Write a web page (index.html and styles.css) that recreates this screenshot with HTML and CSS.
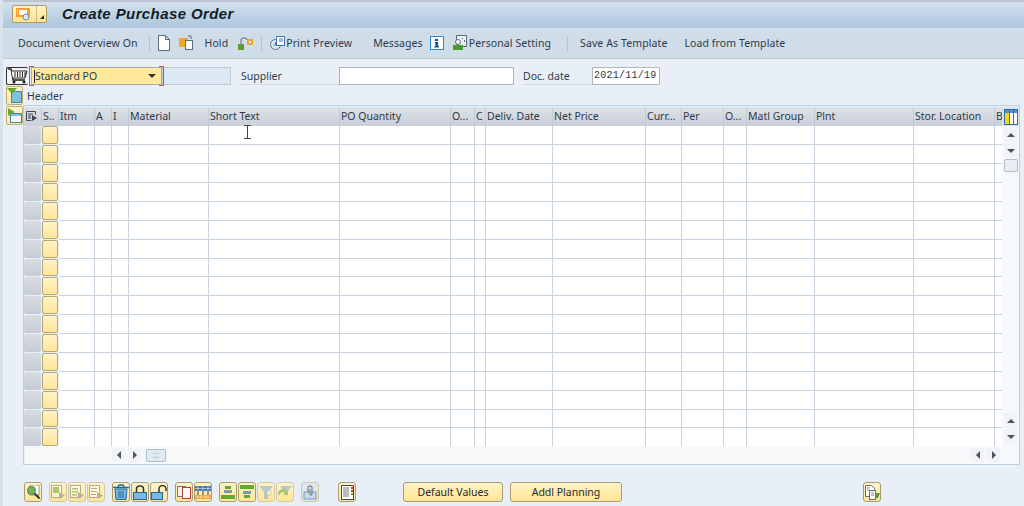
FILE: index.html
```html
<!DOCTYPE html>
<html lang="en">

<head>
    <meta charset="UTF-8">
    <title>Create Purchase Order</title>
    <link rel="stylesheet" href="styles.css">
</head>

<body>
    <div class="title-bar">
        <div class="menu-btn">
            <span class="menu-btn-main">
                <svg width="20" height="16" viewBox="0 0 20 16">
                    <rect x="1" y="2" width="14" height="9" fill="#f3a030" />
                    <rect x="4" y="4" width="8" height="5" fill="#fff" />
                    <circle cx="11" cy="11" r="3" fill="#d8e4f0" stroke="#6a8cb0" />
                    <path d="M2 4h1M2 6h1M2 8h1" stroke="#fff" />
                </svg>
            </span>
            <span class="menu-btn-arrow"></span>
        </div>
        <h1>Create Purchase Order</h1>
    </div>

    <div class="toolbar">
        <span class="tb-text first">Document Overview On</span>
        <span class="tb-sep sep-a"></span>
        <svg class="tb-icon icon-doc" width="12" height="16" viewBox="0 0 12 16">
            <path d="M.5.5h7l4 4v11H.5z M7.5.5v4h4" fill="#fff" stroke="#5f6b78" />
        </svg>
        <svg class="tb-icon icon-tpl" width="15" height="16" viewBox="0 0 15 16">
            <rect x="0" y="3" width="9" height="9" fill="#f3a428" />
            <rect x="6.500" y="5.500" width="7" height="9" fill="#fff" stroke="#5f6b78" />
            <path d="M9 1h3v3" fill="none" stroke="#5f6b78" />
        </svg>
        <span class="tb-text hold">Hold</span>
        <svg class="tb-icon icon-hold" width="15" height="14" viewBox="0 0 15 14">
            <rect x="0" y="8" width="6" height="6" fill="#5c9e2e" />
            <rect x="9" y="3" width="6" height="6" fill="#f3a428" />
            <rect x="11" y="5" width="2" height="2" fill="#fff" />
            <path d="M3 8V4a2 2 0 0 1 2-2h2a2 2 0 0 1 2 2" fill="none" stroke="#5f6b78" />
        </svg>
        <span class="tb-sep sep-b"></span>
        <svg class="tb-icon icon-print" width="16" height="16" viewBox="0 0 16 16">
            <circle cx="5.500" cy="9.500" r="5" fill="#dfe8f0" stroke="#56708c" />
            <rect x="6.500" y="1.500" width="8" height="9" fill="#fff" stroke="#3f78b5" />
            <path d="M5.500 7v3h-2M9 4h4M9 6h4" stroke="#3f78b5" fill="none" />
        </svg>
        <span class="tb-text">Print Preview</span>
        <span class="tb-text messages">Messages</span>
        <svg class="tb-icon icon-info" width="14" height="14" viewBox="0 0 14 14">
            <rect x=".5" y=".5" width="13" height="13" fill="#fff" stroke="#2e8ad0" />
            <path d="M5 3h3v2H5zM5 6h3v4h1v1.500H4.500V10H5.500V7.500H5z" fill="#14508c" />
        </svg>
        <svg class="tb-icon icon-user" width="14" height="16" viewBox="0 0 14 16">
            <rect x="3.500" y=".5" width="10" height="11" fill="#eef2f5" stroke="#5f6b78" />
            <circle cx="5" cy="7" r="2.500" fill="#fff" stroke="#5f6b78" />
            <rect x="0" y="10" width="10" height="5" fill="#4f9a2e" />
            <path d="M9 3h1v1H9zM11 5h1v2h-1z" fill="#5f6b78" />
        </svg>
        <span class="tb-text personal">Personal Setting</span>
        <span class="tb-sep sep-c"></span>
        <span class="tb-text save">Save As Template</span>
        <span class="tb-text load">Load from Template</span>
    </div>

    <main class="content">
        <div class="filter-row">
            <button class="cart-btn">
                <svg width="20" height="16" viewBox="0 0 20 16">
                    <path d="M0 1h3l2 11h12" fill="none" stroke="#222" stroke-width="1.300" />
                    <path d="M3.500 3H19l-2 7H5" fill="#fff" stroke="#222" />
                    <path d="M7 4v5M9.500 4v5M12 4v5M14.500 4v5M17 4v5" stroke="#222" />
                    <circle cx="6" cy="14" r="1.500" fill="#222" />
                    <circle cx="16" cy="14" r="1.500" fill="#222" />
                </svg>
            </button>
            <div class="po-type">
                <span class="caret"></span>
                <span class="po-type-text">Standard PO</span>
                <span class="arrow-down"></span>
            </div>
            <div class="po-number"></div>
            <span class="field-label supplier-label">Supplier</span>
            <div class="field supplier-field"></div>
            <span class="field-label date-label">Doc. date</span>
            <div class="field date-field">2021/11/19</div>
        </div>

        <div class="header-row">
            <button class="side-btn">
                <svg width="15" height="15" viewBox="0 0 15 15">
                    <rect x="4.500" y="3.500" width="10" height="11" fill="#7cc0e2" stroke="#4a7f9f" />
                    <path d="M0 0h10L5 6z" fill="#63a831" />
                </svg>
            </button>
            <span class="header-label">Header</span>
        </div>

        <div class="items-row">
            <button class="side-btn">
                <svg width="15" height="15" viewBox="0 0 15 15">
                    <rect x="3.500" y="5.500" width="11" height="9" fill="#f2f8fc" stroke="#4a7f9f" />
                    <rect x="4" y="6" width="10" height="2" fill="#7cc0e2" />
                    <path d="M1 0l7 4-7 4z" fill="#63a831" />
                </svg>
            </button>

            <div class="grid">
                <div class="grid-main">
                    <div class="table-wrap">
                        <table class="items">
                            <colgroup>
                                <col class="c18"><col class="c17"><col class="c36"><col class="c17"><col class="c17">
                                <col class="c80"><col class="c131"><col class="c111"><col class="c24"><col class="c11">
                                <col class="c67"><col class="c93"><col class="c36"><col class="c42"><col class="c23">
                                <col class="c68"><col class="c99"><col class="c81"><col class="c7">
                            </colgroup>
                            <thead>
                                <tr>
                                    <th class="th-icon">
                                        <svg width="12" height="12" viewBox="0 0 12 12">
                                            <path d="M.5 1.500h9v3M.5 1.500v9h5M2 4h5M2 6h3M2 8h3" fill="none" stroke="#3c4855" />
                                            <path d="M6 5l5 3-5 3z" fill="#3c4855" />
                                        </svg>
                                    </th>
                                    <th>S..</th><th>Itm</th><th>A</th><th>I</th><th>Material</th><th>Short Text</th>
                                    <th>PO Quantity</th><th>O...</th><th>C</th><th>Deliv. Date</th><th>Net Price</th>
                                    <th>Curr...</th><th>Per</th><th>O...</th><th>Matl Group</th><th>Plnt</th>
                                    <th>Stor. Location</th><th>B</th>
                                </tr>
                            </thead>
                            <tbody>
                                <tr><td class="sel"><i></i></td><td class="stat"><i></i></td><td></td><td></td><td></td><td></td><td></td><td></td><td></td><td></td><td></td><td></td><td></td><td></td><td></td><td></td><td></td><td></td><td></td></tr>
                                <tr><td class="sel"><i></i></td><td class="stat"><i></i></td><td></td><td></td><td></td><td></td><td></td><td></td><td></td><td></td><td></td><td></td><td></td><td></td><td></td><td></td><td></td><td></td><td></td></tr>
                                <tr><td class="sel"><i></i></td><td class="stat"><i></i></td><td></td><td></td><td></td><td></td><td></td><td></td><td></td><td></td><td></td><td></td><td></td><td></td><td></td><td></td><td></td><td></td><td></td></tr>
                                <tr><td class="sel"><i></i></td><td class="stat"><i></i></td><td></td><td></td><td></td><td></td><td></td><td></td><td></td><td></td><td></td><td></td><td></td><td></td><td></td><td></td><td></td><td></td><td></td></tr>
                                <tr><td class="sel"><i></i></td><td class="stat"><i></i></td><td></td><td></td><td></td><td></td><td></td><td></td><td></td><td></td><td></td><td></td><td></td><td></td><td></td><td></td><td></td><td></td><td></td></tr>
                                <tr><td class="sel"><i></i></td><td class="stat"><i></i></td><td></td><td></td><td></td><td></td><td></td><td></td><td></td><td></td><td></td><td></td><td></td><td></td><td></td><td></td><td></td><td></td><td></td></tr>
                                <tr><td class="sel"><i></i></td><td class="stat"><i></i></td><td></td><td></td><td></td><td></td><td></td><td></td><td></td><td></td><td></td><td></td><td></td><td></td><td></td><td></td><td></td><td></td><td></td></tr>
                                <tr><td class="sel"><i></i></td><td class="stat"><i></i></td><td></td><td></td><td></td><td></td><td></td><td></td><td></td><td></td><td></td><td></td><td></td><td></td><td></td><td></td><td></td><td></td><td></td></tr>
                                <tr><td class="sel"><i></i></td><td class="stat"><i></i></td><td></td><td></td><td></td><td></td><td></td><td></td><td></td><td></td><td></td><td></td><td></td><td></td><td></td><td></td><td></td><td></td><td></td></tr>
                                <tr><td class="sel"><i></i></td><td class="stat"><i></i></td><td></td><td></td><td></td><td></td><td></td><td></td><td></td><td></td><td></td><td></td><td></td><td></td><td></td><td></td><td></td><td></td><td></td></tr>
                                <tr><td class="sel"><i></i></td><td class="stat"><i></i></td><td></td><td></td><td></td><td></td><td></td><td></td><td></td><td></td><td></td><td></td><td></td><td></td><td></td><td></td><td></td><td></td><td></td></tr>
                                <tr><td class="sel"><i></i></td><td class="stat"><i></i></td><td></td><td></td><td></td><td></td><td></td><td></td><td></td><td></td><td></td><td></td><td></td><td></td><td></td><td></td><td></td><td></td><td></td></tr>
                                <tr><td class="sel"><i></i></td><td class="stat"><i></i></td><td></td><td></td><td></td><td></td><td></td><td></td><td></td><td></td><td></td><td></td><td></td><td></td><td></td><td></td><td></td><td></td><td></td></tr>
                                <tr><td class="sel"><i></i></td><td class="stat"><i></i></td><td></td><td></td><td></td><td></td><td></td><td></td><td></td><td></td><td></td><td></td><td></td><td></td><td></td><td></td><td></td><td></td><td></td></tr>
                                <tr><td class="sel"><i></i></td><td class="stat"><i></i></td><td></td><td></td><td></td><td></td><td></td><td></td><td></td><td></td><td></td><td></td><td></td><td></td><td></td><td></td><td></td><td></td><td></td></tr>
                                <tr><td class="sel"><i></i></td><td class="stat"><i></i></td><td></td><td></td><td></td><td></td><td></td><td></td><td></td><td></td><td></td><td></td><td></td><td></td><td></td><td></td><td></td><td></td><td></td></tr>
                                <tr><td class="sel"><i></i></td><td class="stat"><i></i></td><td></td><td></td><td></td><td></td><td></td><td></td><td></td><td></td><td></td><td></td><td></td><td></td><td></td><td></td><td></td><td></td><td></td></tr>
                            </tbody>
                        </table>
                    </div>

                    <div class="vscroll">
                        <div class="config-btn">
                            <svg width="14" height="16" viewBox="0 0 14 16">
                                <rect x=".5" y=".5" width="13" height="15" fill="#fff" stroke="#2e6ea8" />
                                <rect x="1" y="1" width="12" height="3" fill="#4b94d2" />
                                <rect x="1" y="4" width="4" height="11" fill="#f6d800" />
                                <path d="M5.500 1v14M9.500 1v14" stroke="#2e6ea8" />
                            </svg>
                        </div>
                        <span class="sb-btn"><span class="arrow-up"></span></span>
                        <span class="sb-btn"><span class="arrow-dn"></span></span>
                        <span class="v-thumb"></span>
                        <span class="v-space"></span>
                        <span class="sb-btn"><span class="arrow-up"></span></span>
                        <span class="sb-btn"><span class="arrow-dn"></span></span>
                    </div>
                </div>

                <div class="hscroll">
                    <span class="sb-btn h"><span class="arrow-l"></span></span>
                    <span class="sb-btn h"><span class="arrow-r"></span></span>
                    <span class="h-thumb">:::</span>
                    <span class="h-space"></span>
                    <span class="sb-btn h"><span class="arrow-l"></span></span>
                    <span class="sb-btn h"><span class="arrow-r"></span></span>
                </div>

                <svg class="ibeam" width="7" height="14" viewBox="0 0 7 14">
                    <path d="M0 .5h7M0 13.500h7M3.500 .5v13" stroke="#444" fill="none" />
                </svg>
            </div>
        </div>

        <div class="bottom-bar">
            <div class="btn-group">
                <button class="icon-btn">
                    <svg width="14" height="14" viewBox="0 0 14 14">
                        <rect x="4" y="0" width="9" height="10" fill="#fff" stroke="#7aa36a" />
                        <circle cx="5.500" cy="5.500" r="4" fill="#74b84a" stroke="#5f6b78" />
                        <path d="M8.500 8.500l5 5" stroke="#333" stroke-width="2" />
                    </svg>
                </button>
            </div>
            <div class="btn-group off">
                <button class="icon-btn">
                    <svg width="14" height="14" viewBox="0 0 14 14">
                        <rect x=".5" y=".5" width="10" height="12" fill="#fff" stroke="#5f6b78" />
                        <rect x="2" y="2" width="6" height="6" fill="#5c9e2e" />
                        <path d="M8 7l6 3.500L8 14z" fill="#5f7f95" />
                    </svg>
                </button>
                <button class="icon-btn">
                    <svg width="14" height="14" viewBox="0 0 14 14">
                        <rect x=".5" y=".5" width="10" height="12" fill="#fff" stroke="#5f6b78" />
                        <path d="M2 3h6v1.500H2zM2 6h6v1.500H2zM2 9h5v1.500H2z" fill="#5c9e2e" />
                        <path d="M8 7l6 3.500L8 14z" fill="#5f7f95" />
                    </svg>
                </button>
                <button class="icon-btn">
                    <svg width="14" height="14" viewBox="0 0 14 14">
                        <rect x=".5" y=".5" width="10" height="12" fill="#fff" stroke="#5f6b78" />
                        <path d="M2 3h6v1H2zM2 6h6v1H2zM2 9h5v1H2z" fill="#5f6b78" />
                        <path d="M8 7l6 3.500L8 14z" fill="#5f7f95" />
                    </svg>
                </button>
            </div>
            <div class="btn-group">
                <button class="icon-btn">
                    <svg width="16" height="16" viewBox="0 0 16 16">
                        <path d="M0 3.500h16M5 3l1-2h4l1 2" fill="none" stroke="#1e6a9e" stroke-width="1.500" />
                        <path d="M2 5h12l-1 10.500H3z" fill="#7cb8de" stroke="#1e6a9e" />
                        <path d="M6 7v7M8 7v7M10 7v7" stroke="#1e6a9e" />
                    </svg>
                </button>
                <button class="icon-btn">
                    <svg width="14" height="15" viewBox="0 0 14 15">
                        <path d="M3.500 8V4a3.500 3 0 0 1 7 0V8" fill="none" stroke="#333" stroke-width="1.500" />
                        <rect x=".5" y="7.500" width="13" height="7" fill="#7cb8de" stroke="#1e6a9e" />
                    </svg>
                </button>
                <button class="icon-btn">
                    <svg width="16" height="15" viewBox="0 0 16 15">
                        <path d="M8 8V4a3 3 0 0 1 7 0V6" fill="none" stroke="#333" stroke-width="1.500" />
                        <rect x=".5" y="7.500" width="11" height="7" fill="#7cb8de" stroke="#1e6a9e" />
                    </svg>
                </button>
            </div>
            <div class="btn-group">
                <button class="icon-btn">
                    <svg width="14" height="14" viewBox="0 0 14 14">
                        <rect x=".5" y="1.500" width="8" height="10" fill="#eee" stroke="#7d7d7d" />
                        <rect x="5.500" y="2.500" width="8" height="11" fill="#fff" stroke="#c0392b" />
                    </svg>
                </button>
                <button class="icon-btn">
                    <svg width="16" height="15" viewBox="0 0 16 15">
                        <rect x="0" y="1" width="16" height="5" fill="#3f78b5" />
                        <rect x="0" y="10" width="16" height="4" fill="#f39a28" />
                        <path d="M3 6v4M8 6v4M13 6v4" stroke="#333" />
                        <path d="M0 12h16M3 10v4M6 10v4M10 10v4M13 10v4M0 3.500h16M3 1v5M8 1v5M13 1v5" stroke="#fff" stroke-width=".5" />
                    </svg>
                </button>
            </div>
            <div class="btn-group">
                <button class="icon-btn">
                    <svg width="14" height="14" viewBox="0 0 14 14">
                        <rect x="4" y="1" width="6" height="3" fill="#63a831" />
                        <rect x="3" y="5" width="8" height="3" fill="#7d97ad" />
                        <rect x="0" y="10" width="14" height="4" fill="#63a831" />
                    </svg>
                </button>
                <button class="icon-btn">
                    <svg width="14" height="14" viewBox="0 0 14 14">
                        <rect x="0" y="0" width="14" height="4" fill="#63a831" />
                        <rect x="3" y="6" width="8" height="3" fill="#7d97ad" />
                        <rect x="4" y="10" width="6" height="3" fill="#63a831" />
                    </svg>
                </button>
                <button class="icon-btn dim">
                    <svg width="14" height="14" viewBox="0 0 14 14">
                        <path d="M0 1h14L9 7v7H5V7z" fill="#6aa8d4" />
                        <rect x="8" y="6" width="4" height="4" fill="#fff" stroke="#5f6b78" stroke-width=".5" />
                    </svg>
                </button>
                <button class="icon-btn dim">
                    <svg width="14" height="14" viewBox="0 0 14 14">
                        <path d="M2 1h12L10 6v3H6V6z" fill="#6aa8d4" />
                        <path d="M0 9a5 5 0 0 1 9-3l1-1v5H5l2-2a3 3 0 0 0-5 3z" fill="#5c9e2e" />
                    </svg>
                </button>
            </div>
            <div class="btn-group">
                <button class="icon-btn blue">
                    <svg width="14" height="15" viewBox="0 0 14 15">
                        <path d="M1 7h12v7H1z" fill="#c3dbec" stroke="#7d97ad" />
                        <path d="M5 8V3a2 2 0 0 1 4 0v6a1 1 0 0 1-2 0V4" fill="none" stroke="#7d8b98" stroke-width="1.300" />
                    </svg>
                </button>
            </div>
            <div class="btn-group wide">
                <button class="icon-btn">
                    <svg width="13" height="15" viewBox="0 0 13 15">
                        <rect x=".5" y=".5" width="12" height="14" fill="#fff" stroke="#444" />
                        <path d="M2 3h6M2 5h6M2 7h6M2 9h6M2 11h6" stroke="#777" />
                        <path d="M10 3h2M10 6h2" stroke="#c0392b" stroke-width="2" />
                        <path d="M10 9h2" stroke="#5c9e2e" stroke-width="2" />
                    </svg>
                </button>
            </div>
            <button class="text-btn default-btn">Default Values</button>
            <button class="text-btn planning-btn">Addl Planning</button>
            <button class="icon-btn last-btn">
                <svg width="15" height="15" viewBox="0 0 15 15">
                    <path d="M.5.5h6l3 3v8H.5z" fill="#fff" stroke="#6b6b6b" />
                    <rect x="4.500" y="5.500" width="6" height="9" fill="#fff" stroke="#6b6b6b" />
                    <path d="M2 3h3M2 5h2M6 8h3M6 10h3" stroke="#888" />
                    <path d="M10 8h5l-2 5h-3z" fill="#5c9e2e" />
                </svg>
            </button>
        </div>
    </main>
</body>

</html>
```

FILE: styles.css
```css
* {
    box-sizing: border-box;
}

html,
body {
    height: 100%;
}

body {
    margin: 0;
    height: 506px;
    overflow: hidden;
    font-family: 'Noto Sans', 'Liberation Sans', sans-serif;
    font-size: 10.5px;
    color: #2e3a48;
    background-color: #e8eff7;
    border-left: 3px solid #d8e2ec;
}

button {
    padding: 0;
    font-family: inherit;
}

/* title bar */
.title-bar {
    display: flex;
    align-items: center;
    height: 29px;
    padding: 0 0 3px 9px;
    border-top: 2px solid #bcc4d2;
    border-bottom: 1px solid #d9e4ee;
    background: linear-gradient(#d3e1ed, #abc6dd);
}

.title-bar h1 {
    margin: 0 0 0 15px;
    font-family: 'Liberation Sans', sans-serif;
    font-size: 15px;
    font-style: italic;
    font-weight: bold;
    letter-spacing: 0.4px;
    color: #141c26;
}

.menu-btn {
    display: flex;
    width: 35px;
    height: 18px;
    border: 1px solid #a89c70;
    border-radius: 2px;
    background: linear-gradient(#fff3c4, #ffe38f);
}

.menu-btn-main {
    display: flex;
    align-items: center;
    justify-content: center;
    width: 24px;
    border-right: 1px solid #c9bb88;
}

.menu-btn-arrow {
    flex: 1;
    position: relative;
}

.menu-btn-arrow::after {
    content: "";
    position: absolute;
    right: 2px;
    bottom: 3px;
    border-left: 4px solid transparent;
    border-bottom: 4px solid #222;
}

/* toolbar */
.toolbar {
    display: flex;
    align-items: center;
    height: 30px;
    padding: 0 0 1px 15px;
    background-color: #cfdde8;
    border-bottom: 1px solid #c0ccd8;
    font-size: 10.5px;
    letter-spacing: 0.1px;
}

.tb-text {
    white-space: nowrap;
}

.tb-sep {
    width: 1px;
    height: 15px;
    background-color: #b4c6d6;
}

.tb-icon {
    flex: none;
}

.sep-a { margin-left: 11px; }
.icon-doc { margin-left: 8px; }
.icon-tpl { margin-left: 9px; }
.hold { margin-left: 11px; }
.icon-hold { margin-left: 10px; }
.sep-b { margin-left: 8px; }
.icon-print { margin-left: 8px; }
.messages { margin-left: 21px; }
.icon-info { margin-left: 7px; }
.icon-user { margin-left: 9px; }
.personal { margin-left: 2px; }
.sep-c { margin-left: 16px; }
.save { margin-left: 12px; }
.load { margin-left: 17px; }

/* content */
.content {
    display: flex;
    flex-direction: column;
    padding: 8px 0 0 3px;
}

.filter-row {
    display: flex;
    align-items: center;
    height: 18px;
}

.cart-btn {
    display: flex;
    align-items: center;
    justify-content: center;
    width: 22px;
    height: 18px;
    border: 1px solid #333;
    border-width: 1px 0 1px 1px;
    border-radius: 2px;
    background-color: #f4f4f0;
}

.po-type {
    position: relative;
    display: flex;
    align-items: center;
    width: 131px;
    height: 18px;
    margin-left: 3px;
    padding-left: 2px;
    border: 1px solid #aaa;
    background-color: #ffea9c;
    font-size: 10.5px;
}

.po-type::before,
.po-type::after {
    content: "";
    position: absolute;
    top: -2px;
    bottom: -2px;
    width: 4px;
    border: 1px solid #d05050;
}

.po-type::before {
    left: -3px;
    border-right: none;
}

.po-type::after {
    right: -3px;
    border-left: none;
}

.caret {
    width: 1px;
    height: 13px;
    background-color: #223;
}

.po-type-text {
    flex: 1;
}

.arrow-down {
    margin-right: 5px;
    border-left: 4px solid transparent;
    border-right: 4px solid transparent;
    border-top: 4px solid #333;
}

.po-number {
    width: 69px;
    height: 18px;
    border: 1px solid #c0cad4;
    background-color: #dce8f3;
}

.field-label {
    height: 18px;
    line-height: 18px;
    border-bottom: 1px solid #d3dce6;
    white-space: nowrap;
}

.supplier-label {
    width: 100px;
    margin-left: 8px;
    padding-left: 2px;
}

.field {
    height: 18px;
    border: 1px solid #b4b4b4;
    background-color: #fff;
}

.supplier-field {
    width: 175px;
}

.date-label {
    width: 69px;
    margin-left: 9px;
}

.date-field {
    width: 68px;
    padding-left: 1px;
    font-family: 'Liberation Mono', monospace;
    font-size: 10px;
    line-height: 16px;
    letter-spacing: 0.25px;
}

.header-row {
    display: flex;
    align-items: center;
    height: 19px;
    margin-top: 1px;
}

.header-label {
    margin-left: 4px;
}

.side-btn {
    display: flex;
    flex: none;
    align-items: center;
    justify-content: center;
    width: 17px;
    height: 19px;
    border: 1px solid #bfae6e;
    border-radius: 2px;
    background: linear-gradient(#fff5cf, #ffe9a6);
}

.items-row {
    display: flex;
    align-items: flex-start;
}

.items-row .side-btn {
    margin-top: 1px;
}

/* grid */
.grid {
    position: relative;
    width: 997px;
    height: 360px;
    border: 1px solid #b8cfe4;
    background-color: #e8eff7;
    overflow: hidden;
}

.grid-main {
    display: flex;
    height: 340px;
    padding-top: 1px;
}

.table-wrap {
    width: 978px;
    height: 339px;
    overflow: hidden;
}

.items {
    width: 978px;
    border-collapse: separate;
    border-spacing: 0;
    table-layout: fixed;
    background-color: #fff;
}

.c7 { width: 7px; }
.c11 { width: 11px; }
.c17 { width: 17px; }
.c18 { width: 18px; }
.c23 { width: 23px; }
.c24 { width: 24px; }
.c36 { width: 36px; }
.c42 { width: 42px; }
.c67 { width: 67px; }
.c68 { width: 68px; }
.c80 { width: 80px; }
.c81 { width: 81px; }
.c93 { width: 93px; }
.c99 { width: 99px; }
.c111 { width: 111px; }
.c131 { width: 131px; }

.items th {
    height: 19px;
    padding: 0 0 1px 1px;
    overflow: hidden;
    border-right: 1px solid #bfcbd8;
    background: linear-gradient(#dde2e7, #c9d0d8);
    font-size: 10.5px;
    font-weight: normal;
    text-align: left;
    white-space: nowrap;
}

.items th:last-child {
    border-right: none;
}

.items th.th-icon {
    padding-left: 2px;
    line-height: 0;
}

.items td {
    height: 19px;
    padding: 0;
    border-right: 1px solid #c8d3df;
    border-bottom: 1px solid #c8d3df;
}

.items td:last-child {
    border-right: none;
}

/* the reference is scaled, every eighth row comes out a pixel shorter */
.items tbody tr:nth-child(8n) td {
    height: 18px;
}

.items td.sel,
.items td.stat {
    padding: 0 1px 1px 0;
    border: none;
    background-color: #e8eff7;
}

.items td i {
    display: block;
    height: 18px;
    border-radius: 2px;
}

.items tbody tr:nth-child(8n) td i {
    height: 17px;
}

.sel i {
    background: linear-gradient(#d8dce2, #c6ccd4);
}

.stat i {
    border: 1px solid #b3a77f;
    background: linear-gradient(#fff3c8, #ffe596);
}

.vscroll {
    display: flex;
    flex-direction: column;
    align-items: center;
    width: 17px;
    height: 339px;
    padding-bottom: 2px;
    background-color: #f7f8fa;
}

.config-btn {
    display: flex;
    flex: none;
    align-items: center;
    justify-content: center;
    width: 17px;
    height: 19px;
    background-color: #dde2e7;
}

.sb-btn {
    display: flex;
    flex: none;
    align-items: center;
    justify-content: center;
    width: 14px;
    height: 15px;
    margin-top: 1px;
    background-color: #f1f3f6;
}

.sb-btn.h {
    width: 13px;
    height: 14px;
    margin: 0 3px 0 0;
}

.arrow-up,
.arrow-dn,
.arrow-l,
.arrow-r {
    width: 0;
    height: 0;
}

.arrow-up {
    border-left: 4px solid transparent;
    border-right: 4px solid transparent;
    border-bottom: 4px solid #4a5664;
}

.arrow-dn {
    border-left: 4px solid transparent;
    border-right: 4px solid transparent;
    border-top: 4px solid #4a5664;
}

.arrow-l {
    border-top: 4px solid transparent;
    border-bottom: 4px solid transparent;
    border-right: 4px solid #4a5664;
}

.arrow-r {
    border-top: 4px solid transparent;
    border-bottom: 4px solid transparent;
    border-left: 4px solid #4a5664;
}

.v-thumb {
    flex: none;
    width: 14px;
    height: 13px;
    margin-top: 1px;
    border: 1px solid #aebccb;
    border-radius: 2px;
    background-color: #e6edf4;
}

.v-space {
    flex: 1;
}

.hscroll {
    display: flex;
    align-items: center;
    height: 18px;
    margin-left: 1px;
    padding: 0 16px 0 87px;
    background-color: #f7f8fa;
}

.h-thumb {
    width: 20px;
    height: 13px;
    margin-left: 2px;
    border: 1px solid #aebccb;
    border-radius: 2px;
    background-color: #e2e8ef;
    font-size: 8px;
    line-height: 10px;
    text-align: center;
    color: #8b98a6;
}

.h-space {
    flex: 1;
}

.ibeam {
    position: absolute;
    top: 19px;
    left: 220px;
}

/* bottom buttons */
.bottom-bar {
    display: flex;
    align-items: center;
    height: 20px;
    margin-top: 17px;
    padding-left: 18px;
}

.btn-group {
    display: flex;
    gap: 1px;
    margin-right: 7px;
}

.btn-group.wide {
    margin-left: 12px;
    margin-right: 47px;
}

.btn-group.off .icon-btn,
.icon-btn.dim,
.icon-btn.blue {
    border-color: #d0c8a8;
}

.btn-group.off svg,
.icon-btn.dim svg {
    opacity: 0.5;
}

.icon-btn {
    display: flex;
    flex: none;
    align-items: center;
    justify-content: center;
    width: 18px;
    height: 20px;
    border: 1px solid #a89c70;
    border-radius: 3px;
    background: linear-gradient(#fff3c8, #ffe596);
}

.icon-btn.blue {
    background: #dfe7ee;
}

.text-btn {
    height: 20px;
    border: 1px solid #a89c70;
    border-radius: 3px;
    background: linear-gradient(#fff3c8, #ffe596);
    font-size: 10.5px;
    color: #2a2a2a;
}

.default-btn {
    width: 100px;
}

.planning-btn {
    width: 112px;
    margin-left: 7px;
}

.last-btn {
    margin-left: 241px;
}
```
